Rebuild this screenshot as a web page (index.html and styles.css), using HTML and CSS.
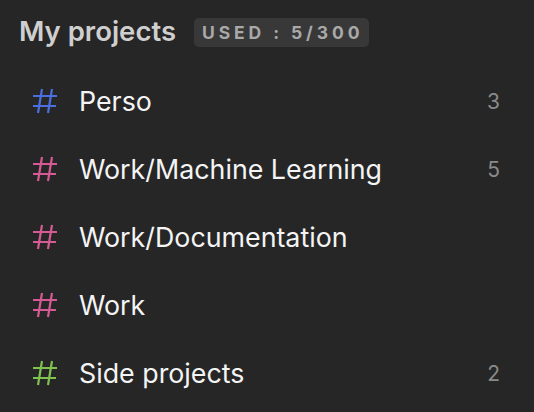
FILE: index.html
```html
<!DOCTYPE html>
<html>
<head>
<meta charset="utf-8">
<link rel="stylesheet" href="styles.css">
</head>
<body>
<div class="panel">
  <div class="header">
    <span class="title">My projects</span>
    <span class="badge">USED : 5/300</span>
  </div>
  <ul class="list">
    <li class="row">
      <svg class="hash blue" viewBox="0 0 26 26"><path d="M10 1 L6 25 M20 1 L16 25 M1 8 H25 M1 18 H24"/></svg>
      <span class="name">Perso</span>
      <span class="count">3</span>
    </li>
    <li class="row">
      <svg class="hash pink" viewBox="0 0 26 26"><path d="M10 1 L6 25 M20 1 L16 25 M1 8 H25 M1 18 H24"/></svg>
      <span class="name">Work/Machine Learning</span>
      <span class="count">5</span>
    </li>
    <li class="row">
      <svg class="hash pink" viewBox="0 0 26 26"><path d="M10 1 L6 25 M20 1 L16 25 M1 8 H25 M1 18 H24"/></svg>
      <span class="name">Work/Documentation</span>
      <span class="count"></span>
    </li>
    <li class="row">
      <svg class="hash pink" viewBox="0 0 26 26"><path d="M10 1 L6 25 M20 1 L16 25 M1 8 H25 M1 18 H24"/></svg>
      <span class="name">Work</span>
      <span class="count"></span>
    </li>
    <li class="row">
      <svg class="hash green" viewBox="0 0 26 26"><path d="M10 1 L6 25 M20 1 L16 25 M1 8 H25 M1 18 H24"/></svg>
      <span class="name">Side projects</span>
      <span class="count">2</span>
    </li>
  </ul>
</div>
</body>
</html>
```
FILE: styles.css
```css
html, body {
  margin: 0;
  padding: 0;
  background: #262626;
  width: 534px;
  height: 412px;
  overflow: hidden;
}
.panel {
  font-family: Inter, "Noto Sans", sans-serif;
  padding: 18px 34px 0 19px;
}
.header {
  display: flex;
  align-items: center;
  gap: 18px;
  height: 29px;
}
.title {
  color: #cfcfcf;
  font-size: 27.5px;
  font-weight: 600;
  margin-bottom: 3px;
}
.badge {
  background: #383838;
  color: #a9a9a9;
  border-radius: 5px;
  font-size: 17.5px;
  font-weight: 700;
  letter-spacing: 3.9px;
  height: 29px;
  padding: 0 6px 0 8px;
  display: flex;
  align-items: center;
}
.list {
  list-style: none;
  margin: 20px 0 0 0;
  padding: 0 0 0 13px;
}
.row {
  display: flex;
  align-items: center;
  height: 68px;
}
.hash {
  width: 26px;
  height: 26px;
  flex: none;
  fill: none;
  stroke-width: 2.2;
}
.blue { stroke: #4b6fe2; }
.pink { stroke: #d65a93; }
.green { stroke: #7fc24f; }
.name {
  color: #f4f4f4;
  font-size: 26.8px;
  font-weight: 400;
  margin-left: 21px;
  flex: 1;
}
.count {
  color: #8a8a8a;
  font-size: 21px;
}
```
